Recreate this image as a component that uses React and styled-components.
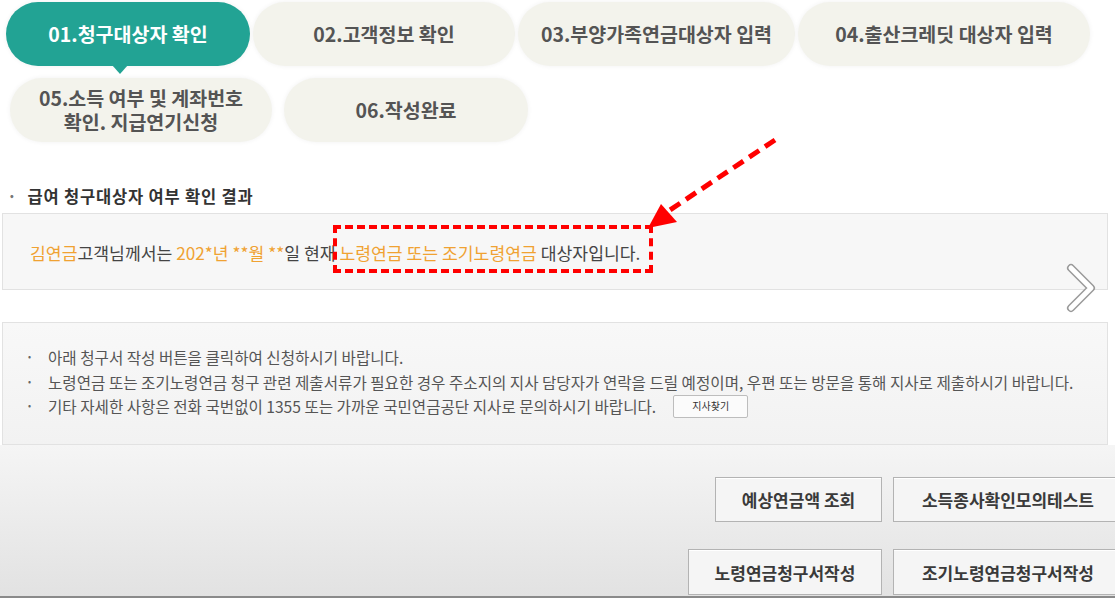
import React from 'react';
import styled, { createGlobalStyle, css } from 'styled-components';

const GlobalStyle = createGlobalStyle`
  html, body {
    margin: 0;
    padding: 0;
    background: #fff;
    overflow: hidden;
  }
  body {
    font-family: "Noto Sans CJK KR", "Noto Sans", sans-serif;
  }
`;

const Page = styled.div`
  position: relative;
  width: 1115px;
  height: 598px;
  overflow: hidden;
  display: flex;
  flex-direction: column;
`;

const Steps = styled.div`
  padding-top: 2px;
  display: flex;
  flex-direction: column;
  gap: 12px;
`;

const StepRow = styled.div`
  display: flex;
  gap: ${p => p.$gap}px;
  padding-left: ${p => p.$indent}px;
`;

const Step = styled.div`
  position: relative;
  width: ${p => p.$w}px;
  height: 64px;
  border-radius: 32px;
  display: flex;
  align-items: center;
  justify-content: center;
  text-align: center;
  font-size: 19.5px;
  font-weight: 700;
  line-height: 24px;
  background: ${p => (p.$active ? '#22a394' : '#f3f3ec')};
  color: ${p => (p.$active ? '#fff' : '#545454')};
  box-shadow: 0 0 5px rgba(0, 0, 0, 0.06);
  ${p =>
    p.$active &&
    css`
      &::after {
        content: '';
        position: absolute;
        left: 106px;
        bottom: -8px;
        border-left: 8px solid transparent;
        border-right: 8px solid transparent;
        border-top: 9px solid #22a394;
      }
    `}
`;

const SectionTitle = styled.h3`
  margin: 44px 0 7px 7px;
  display: flex;
  gap: 10px;
  font-size: 16.5px;
  font-weight: 700;
  letter-spacing: 0.8px;
  line-height: 20px;
  color: #333;
  &::before {
    content: '·';
    color: #777;
  }
`;

const ResultPanel = styled.div`
  position: relative;
  margin: 0 7px 0 2px;
  padding: 27px 27px 24px;
  background: #f7f7f7;
  border: 1px solid #e2e2e2;
  font-size: 17.2px;
  line-height: 24px;
  color: #444;
  white-space: nowrap;
`;

const Hl = styled.span`
  color: #f0a232;
`;

const Mark = styled.div`
  position: absolute;
  left: 330px;
  top: 11px;
  width: 320px;
  height: 48px;
  box-sizing: border-box;
  border: 4px dashed #ff0000;
`;

const NextArrow = styled.svg`
  position: absolute;
  right: 10px;
  top: 49px;
`;

const InfoPanel = styled.div`
  margin: 32px 7px 0 2px;
  padding: 22px 20px 25.5px 25px;
  background: linear-gradient(#f8f8f8, #f2f2f2);
  border: 1px solid #e2e2e2;
`;

const InfoList = styled.ul`
  margin: 0;
  padding: 0;
  list-style: none;
`;

const InfoItem = styled.li`
  display: flex;
  align-items: center;
  gap: 13px;
  font-size: 15.6px;
  line-height: 24.5px;
  color: #555;
  white-space: nowrap;
  &::before {
    content: '•';
    font-size: 9px;
    color: #666;
    width: 7px;
  }
`;

const SmallButton = styled.span`
  display: inline-flex;
  align-items: center;
  justify-content: center;
  margin-left: 4px;
  width: 75px;
  height: 23px;
  box-sizing: border-box;
  border: 1px solid #bdbdbd;
  border-radius: 2px;
  background: #fbfbfb;
  font-size: 10px;
  color: #333;
`;

const Bottom = styled.div`
  flex: 1;
  display: flex;
  flex-direction: column;
  gap: 27px;
  padding-top: 32px;
  background: linear-gradient(#f5f5f5, #e2e2e2);
  border-bottom: 2px solid #8a8a8a;
`;

const ButtonRow = styled.div`
  display: flex;
  justify-content: flex-end;
  gap: 11px;
  margin-right: -8px;
`;

const ActionButton = styled.div`
  width: ${p => p.$w}px;
  height: ${p => p.$h}px;
  box-sizing: border-box;
  display: flex;
  align-items: center;
  justify-content: center;
  border: 1px solid #b3b3b3;
  background: #f5f5f5;
  box-shadow: inset 0 1px 0 #fff;
  font-size: 17px;
  font-weight: 700;
  color: #3a3a3a;
`;

const Pointer = styled.svg`
  position: absolute;
  left: 640px;
  top: 130px;
`;

export default function App() {
  return (
    <Page>
      <GlobalStyle />
      <Steps>
        <StepRow $gap={3} $indent={6}>
          <Step $w={244} $active>01.청구대상자 확인</Step>
          <Step $w={262}>02.고객정보 확인</Step>
          <Step $w={277}>03.부양가족연금대상자 입력</Step>
          <Step $w={292}>04.출산크레딧 대상자 입력</Step>
        </StepRow>
        <StepRow $gap={12} $indent={10}>
          <Step $w={262}>
            05.소득 여부 및 계좌번호
            <br />
            확인. 지급연기신청
          </Step>
          <Step $w={244}>06.작성완료</Step>
        </StepRow>
      </Steps>

      <SectionTitle>급여 청구대상자 여부 확인 결과</SectionTitle>

      <ResultPanel>
        <Hl>김연금</Hl>고객님께서는 <Hl>202*년 **월 **</Hl>일 현재{' '}
        <Hl>노령연금 또는 조기노령연금</Hl> 대상자입니다.
        <Mark />
        <NextArrow width="32" height="50" viewBox="0 0 32 50">
          <polyline points="6,5 26,25 6,45" fill="none" stroke="#9a9a9a" strokeWidth="8" strokeLinecap="round" strokeLinejoin="round" />
          <polyline points="6,5 26,25 6,45" fill="none" stroke="#fff" strokeWidth="5" strokeLinecap="round" strokeLinejoin="round" />
        </NextArrow>
      </ResultPanel>

      <InfoPanel>
        <InfoList>
          <InfoItem>아래 청구서 작성 버튼을 클릭하여 신청하시기 바랍니다.</InfoItem>
          <InfoItem>
            노령연금 또는 조기노령연금 청구 관련 제출서류가 필요한 경우 주소지의 지사 담당자가 연락을 드릴 예정이며, 우편 또는 방문을 통해 지사로 제출하시기 바랍니다.
          </InfoItem>
          <InfoItem>
            기타 자세한 사항은 전화 국번없이 1355 또는 가까운 국민연금공단 지사로 문의하시기 바랍니다.
            <SmallButton>지사찾기</SmallButton>
          </InfoItem>
        </InfoList>
      </InfoPanel>

      <Bottom>
        <ButtonRow>
          <ActionButton $w={167} $h={45}>예상연금액 조회</ActionButton>
          <ActionButton $w={230} $h={45}>소득종사확인모의테스트</ActionButton>
        </ButtonRow>
        <ButtonRow>
          <ActionButton $w={194} $h={46}>노령연금청구서작성</ActionButton>
          <ActionButton $w={230} $h={46}>조기노령연금청구서작성</ActionButton>
        </ButtonRow>
      </Bottom>

      <Pointer width="150" height="110" viewBox="0 0 150 110">
        <line x1="135" y1="10" x2="30" y2="80" stroke="#ff0000" strokeWidth="5" strokeDasharray="12 7" />
        <polygon points="8,98 21,74 37,92" fill="#ff0000" />
      </Pointer>
    </Page>
  );
}
